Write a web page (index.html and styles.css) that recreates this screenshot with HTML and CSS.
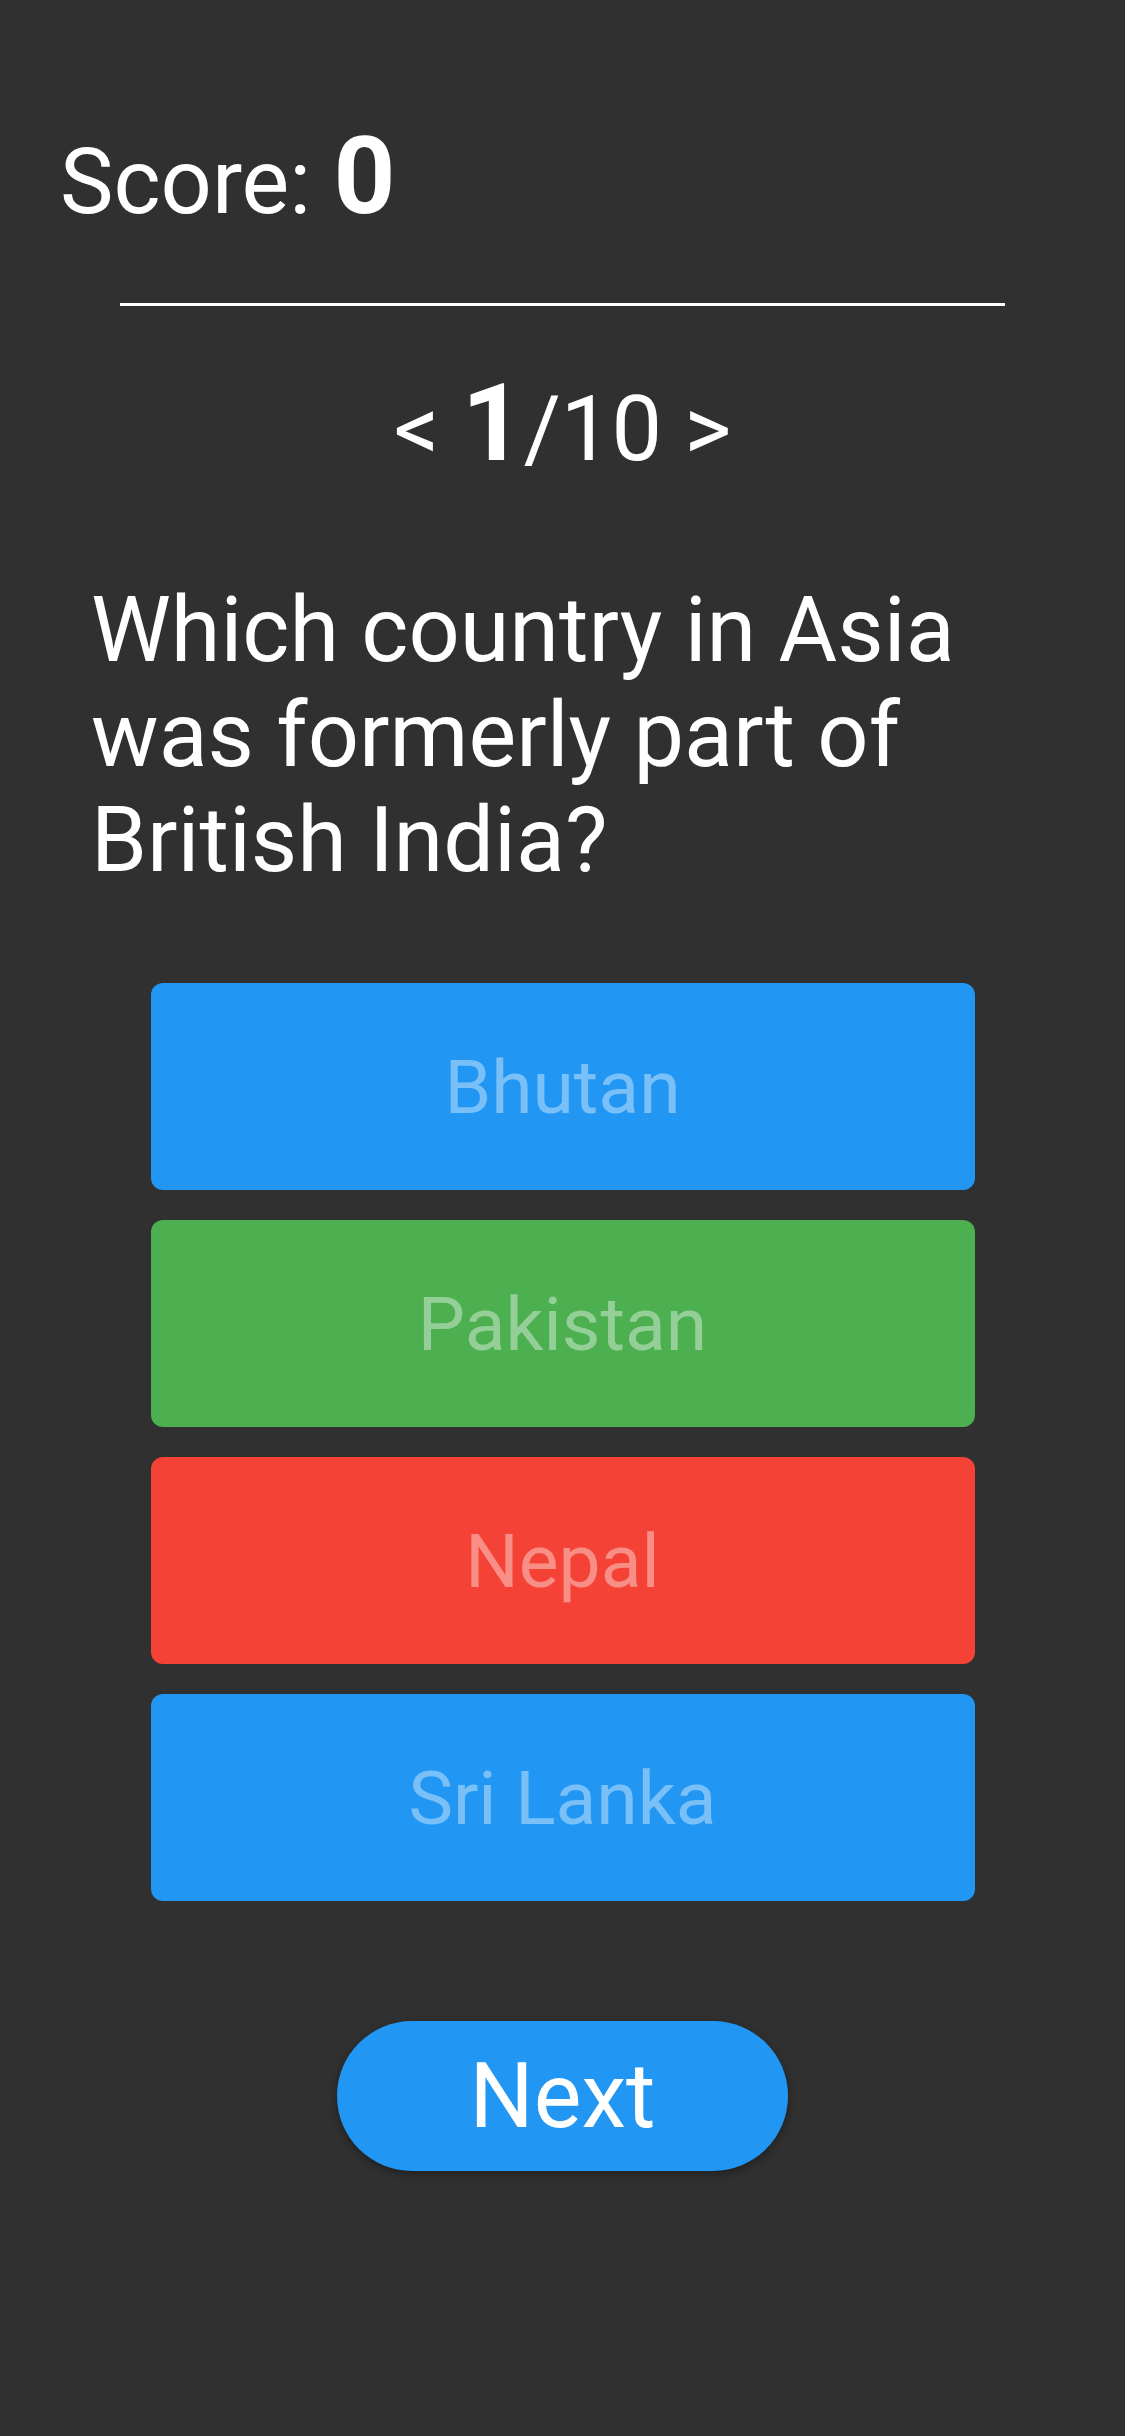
FILE: index.html
```html
<!DOCTYPE html>
<html lang="en">
<head>
<meta charset="utf-8">
<title>Quiz</title>
<link rel="stylesheet" href="styles.css">
</head>
<body>
<main class="quiz">
  <div class="score">Score: <span class="score-value">0</span></div>
  <hr class="divider">
  <div class="counter">&lt; <span class="current">1</span>/10 &gt;</div>
  <p class="question">Which country in Asia was formerly part of British India?</p>
  <div class="answers">
    <button class="answer blue">Bhutan</button>
    <button class="answer green">Pakistan</button>
    <button class="answer red">Nepal</button>
    <button class="answer blue">Sri Lanka</button>
  </div>
  <div class="actions">
    <button class="next">Next</button>
  </div>
</main>
</body>
</html>
```

FILE: styles.css
```css
html, body {
  margin: 0;
  padding: 0;
  background: #303030;
}

body {
  width: 1125px;
  min-height: 2436px;
  font-family: Roboto, "Noto Sans", sans-serif;
  color: #ffffff;
}

.quiz {
  display: flex;
  flex-direction: column;
  padding-top: 113px;
}

.score {
  font-size: 90px;
  padding-left: 60px;
  line-height: normal;
}

.score-value {
  font-size: 108px;
  font-weight: 700;
}

.divider {
  width: 885px;
  height: 3px;
  margin: 64px auto 0;
  border: 0;
  background: #ffffff;
}

.counter {
  margin-top: 54px;
  text-align: center;
  font-size: 90px;
  line-height: normal;
}

.current {
  font-size: 108px;
  font-weight: 700;
}

.question {
  margin: 92px 0 0;
  padding: 0 90px 0 91px;
  font-size: 90px;
  line-height: 105px;
}

.answers {
  margin-top: 90px;
  display: flex;
  flex-direction: column;
  align-items: center;
  gap: 30px;
}

.answer {
  width: 824px;
  height: 207px;
  border: 0;
  border-radius: 12px;
  font-family: Roboto, "Noto Sans", sans-serif;
  font-size: 75px;
  color: rgba(255, 255, 255, 0.4);
  padding: 0;
}

.blue { background: #2196f3; }
.green { background: #4caf50; }
.red { background: #f44336; }

.actions {
  display: flex;
  justify-content: center;
  margin-top: 120px;
}

.next {
  width: 451px;
  height: 150px;
  border: 0;
  border-radius: 75px;
  background: #2196f3;
  color: #ffffff;
  font-family: Roboto, "Noto Sans", sans-serif;
  font-size: 90px;
  padding: 0;
  box-shadow: 0 3px 8px rgba(0, 0, 0, 0.35);
}
```
